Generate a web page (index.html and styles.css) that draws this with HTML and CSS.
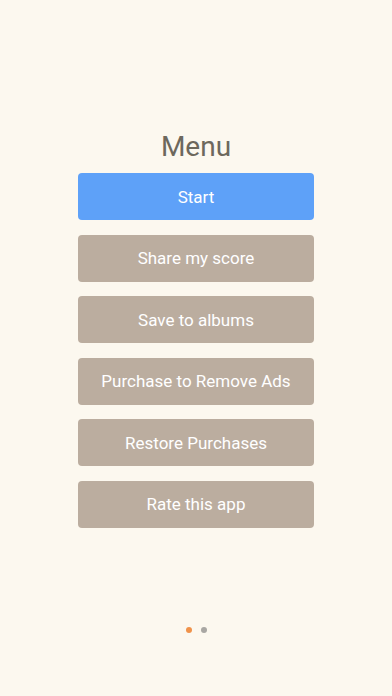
FILE: index.html
```html
<!DOCTYPE html>
<html lang="en">
<head>
    <meta charset="UTF-8">
    <meta name="viewport" content="width=device-width, initial-scale=1.0">
    <title>Menu</title>
    <link rel="stylesheet" href="styles.css">
</head>
<body>
    <div class="menu">
        <h1 class="menu-title">Menu</h1>
        <button class="menu-button start">Start</button>
        <button class="menu-button">Share my score</button>
        <button class="menu-button">Save to albums</button>
        <button class="menu-button">Purchase to Remove Ads</button>
        <button class="menu-button">Restore Purchases</button>
        <button class="menu-button">Rate this app</button>
    </div>
    <div class="pager">
        <span class="dot active"></span>
        <span class="dot"></span>
    </div>
</body>
</html>
```

FILE: styles.css
```css
html, body {
    margin: 0;
    height: 100%;
}

body {
    background-color: #fcf8ef;
    font-family: Roboto, "Liberation Sans", sans-serif;
    display: flex;
    flex-direction: column;
    align-items: center;
}

.menu {
    display: flex;
    flex-direction: column;
    align-items: center;
    gap: 14.5px;
    margin-top: 128.5px;
    width: 236px;
}

.menu-title {
    margin: 0 0 -6px 0;
    font-size: 28px;
    font-weight: 400;
    color: #6d685d;
    line-height: 36px;
}

.menu-button {
    width: 100%;
    height: 47px;
    border: none;
    border-radius: 4px;
    background-color: #bbad9f;
    color: #ffffff;
    font-family: inherit;
    font-size: 17px;
    padding: 0;
}

.menu-button.start {
    background-color: #5ea1f8;
}

.pager {
    display: flex;
    gap: 9px;
    margin-top: 99px;
}

.dot {
    width: 6px;
    height: 6px;
    border-radius: 50%;
    background-color: #a9a7a3;
}

.dot.active {
    background-color: #f0924a;
}
```
